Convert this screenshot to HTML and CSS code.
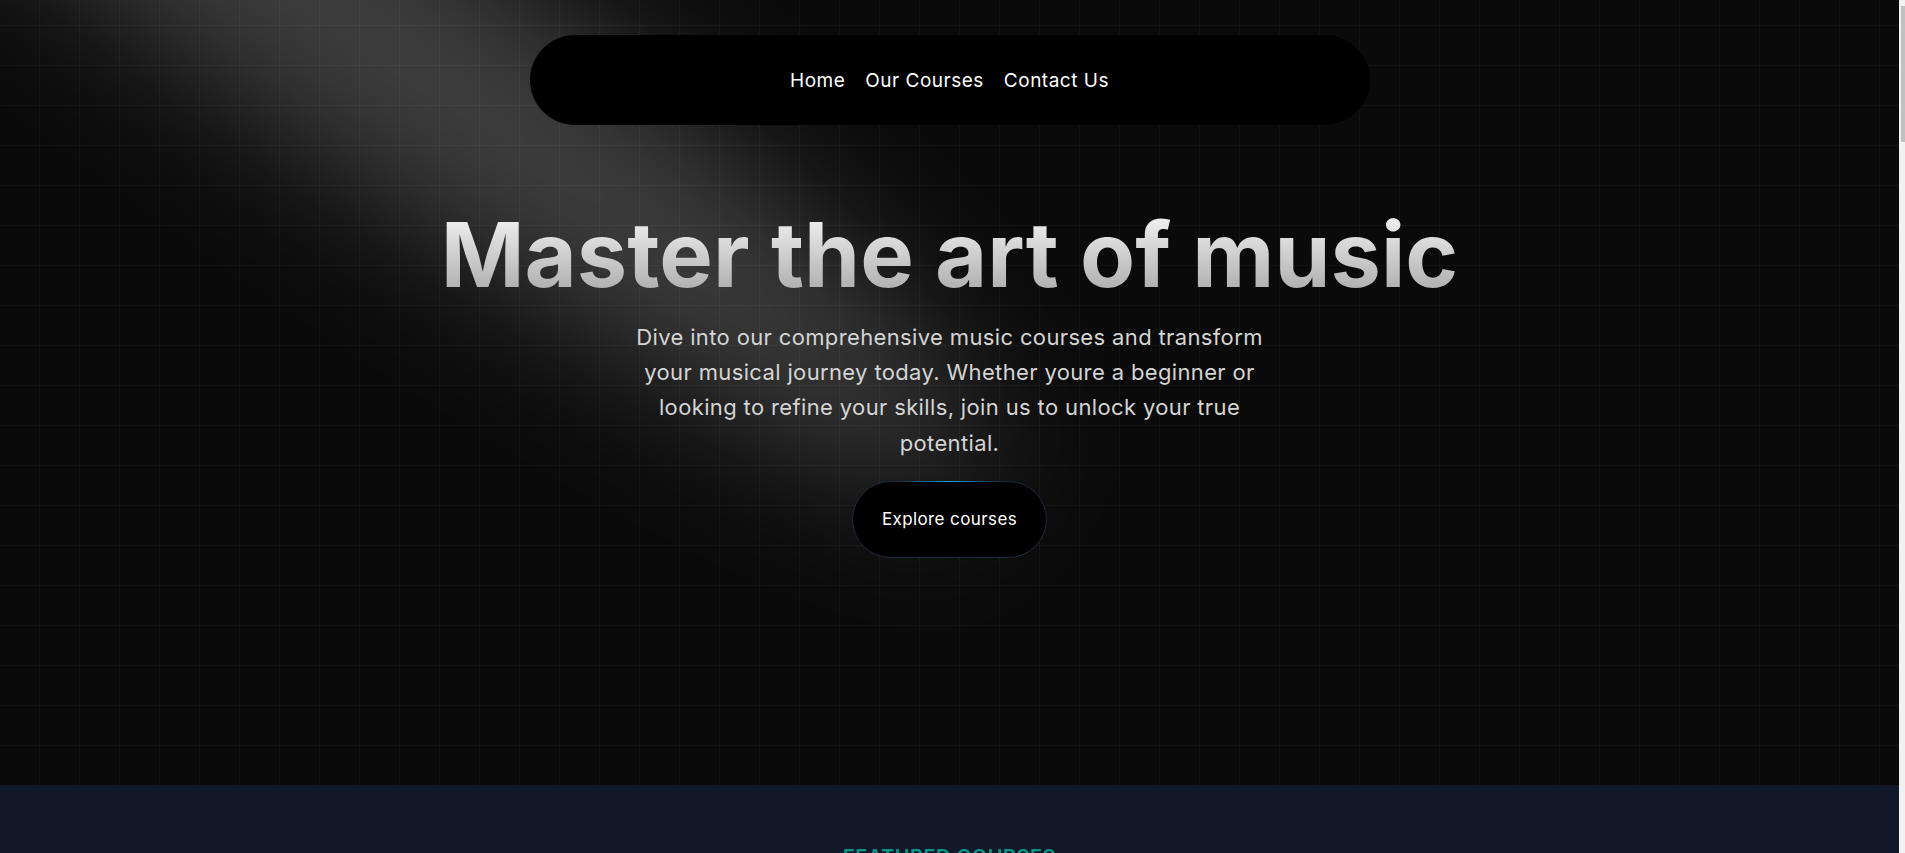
FILE: index.html
```html
<!DOCTYPE html>
<html lang="en">
<head>
<meta charset="utf-8">
<title>Music School</title>
<link rel="stylesheet" href="styles.css">
</head>
<body>
<div class="page">
  <section class="hero">
    <svg class="spotlight" viewBox="0 0 1899 785" preserveAspectRatio="xMinYMin slice" aria-hidden="true">
      <defs>
        <filter id="beamBlur" x="-1500" y="-1500" width="5000" height="4000" filterUnits="userSpaceOnUse">
          <feGaussianBlur stdDeviation="70"/>
        </filter>
      </defs>
      <ellipse cx="295" cy="-23" rx="850" ry="130" transform="rotate(36 295 -23)" fill="#ffffff" fill-opacity="0.21" filter="url(#beamBlur)"/>
    </svg>
    <nav class="nav">
      <a href="#" class="nav-link">Home</a>
      <a href="#" class="nav-link">Our Courses</a>
      <a href="#" class="nav-link">Contact Us</a>
    </nav>
    <div class="hero-content">
      <h1 class="hero-title">Master the art of music</h1>
      <p class="hero-text">Dive into our comprehensive music courses and transform your musical journey today. Whether youre a beginner or looking to refine your skills, join us to unlock your true potential.</p>
      <a href="#" class="btn"><span class="btn-glow"></span>Explore courses</a>
    </div>
  </section>
  <section class="featured">
    <p class="eyebrow">Featured Courses</p>
    <h2 class="featured-title">Learn With the Best</h2>
  </section>
</div>
<div class="scrollbar"><div class="scrollbar-thumb"></div></div>
</body>
</html>
```
FILE: styles.css
```css
html, body {
  margin: 0;
  padding: 0;
}
body {
  background: #111827;
  font-family: "Inter", "Liberation Sans", sans-serif;
  color: #fff;
}
.page {
  margin-right: 6px;
}
.scrollbar {
  position: fixed;
  top: 0;
  right: 0;
  width: 6px;
  height: 100vh;
  background: #f1f1f1;
  z-index: 100;
}
.scrollbar-thumb {
  margin: 6px 0 0 2px;
  width: 4px;
  height: 136px;
  background: #c1c1c1;
}
.hero {
  position: relative;
  height: 785px;
  overflow: hidden;
  background-color: #0a0a0a;
  background-image:
    linear-gradient(to right, rgba(255,255,255,0.035) 1px, transparent 1px),
    linear-gradient(to bottom, rgba(255,255,255,0.035) 1px, transparent 1px);
  background-size: 40px 40px;
  background-position: 39px 25px;
  display: flex;
  flex-direction: column;
  align-items: center;
}
.spotlight {
  position: absolute;
  left: 0;
  top: 0;
  width: 100%;
  height: 100%;
  overflow: visible;
  pointer-events: none;
  z-index: 1;
}
.nav {
  position: relative;
  z-index: 5;
  margin-top: 35px;
  width: 840px;
  height: 90px;
  border-radius: 9999px;
  background: #000;
  display: flex;
  align-items: center;
  justify-content: center;
  gap: 20px;
}
.nav-link {
  color: #fff;
  text-decoration: none;
  font-size: 19px;
  letter-spacing: 0.5px;
  line-height: 24px;
  padding-top: 2px;
}
.hero-content {
  position: relative;
  z-index: 10;
  display: flex;
  flex-direction: column;
  align-items: center;
  margin-top: 80px;
}
.hero-title {
  margin: 0;
  font-size: 90px;
  line-height: 1.1;
  font-weight: 700;
  text-align: center;
  background: linear-gradient(to bottom, #fafafa, #a3a3a3);
  -webkit-background-clip: text;
  background-clip: text;
  color: transparent;
}
.hero-text {
  margin: 16px 0 0;
  max-width: 650px;
  font-size: 22px;
  letter-spacing: 0.36px;
  line-height: 35.2px;
  color: #d4d4d4;
  text-align: center;
}
.btn {
  position: relative;
  margin-top: 20px;
  box-sizing: border-box;
  width: 195px;
  height: 77px;
  border-radius: 9999px;
  background: #000;
  border: 1px solid #1e293b;
  color: #fff;
  text-decoration: none;
  font-size: 17px;
  letter-spacing: 0.4px;
  display: flex;
  align-items: center;
  justify-content: center;
}
.btn-glow {
  position: absolute;
  top: -1px;
  left: 25%;
  width: 50%;
  height: 1px;
  background: linear-gradient(to right, transparent, #0ea5e9, transparent);
}
.featured {
  min-height: 600px;
  box-sizing: border-box;
  padding-top: 60px;
  background: #111827;
  text-align: center;
}
.eyebrow {
  margin: 0;
  color: #0d9488;
  font-size: 20px;
  line-height: 24px;
  font-weight: 600;
  letter-spacing: 0.025em;
  text-transform: uppercase;
}
.featured-title {
  margin: 8px 0 0;
  font-size: 36px;
  font-weight: 800;
  color: #fff;
}
```
